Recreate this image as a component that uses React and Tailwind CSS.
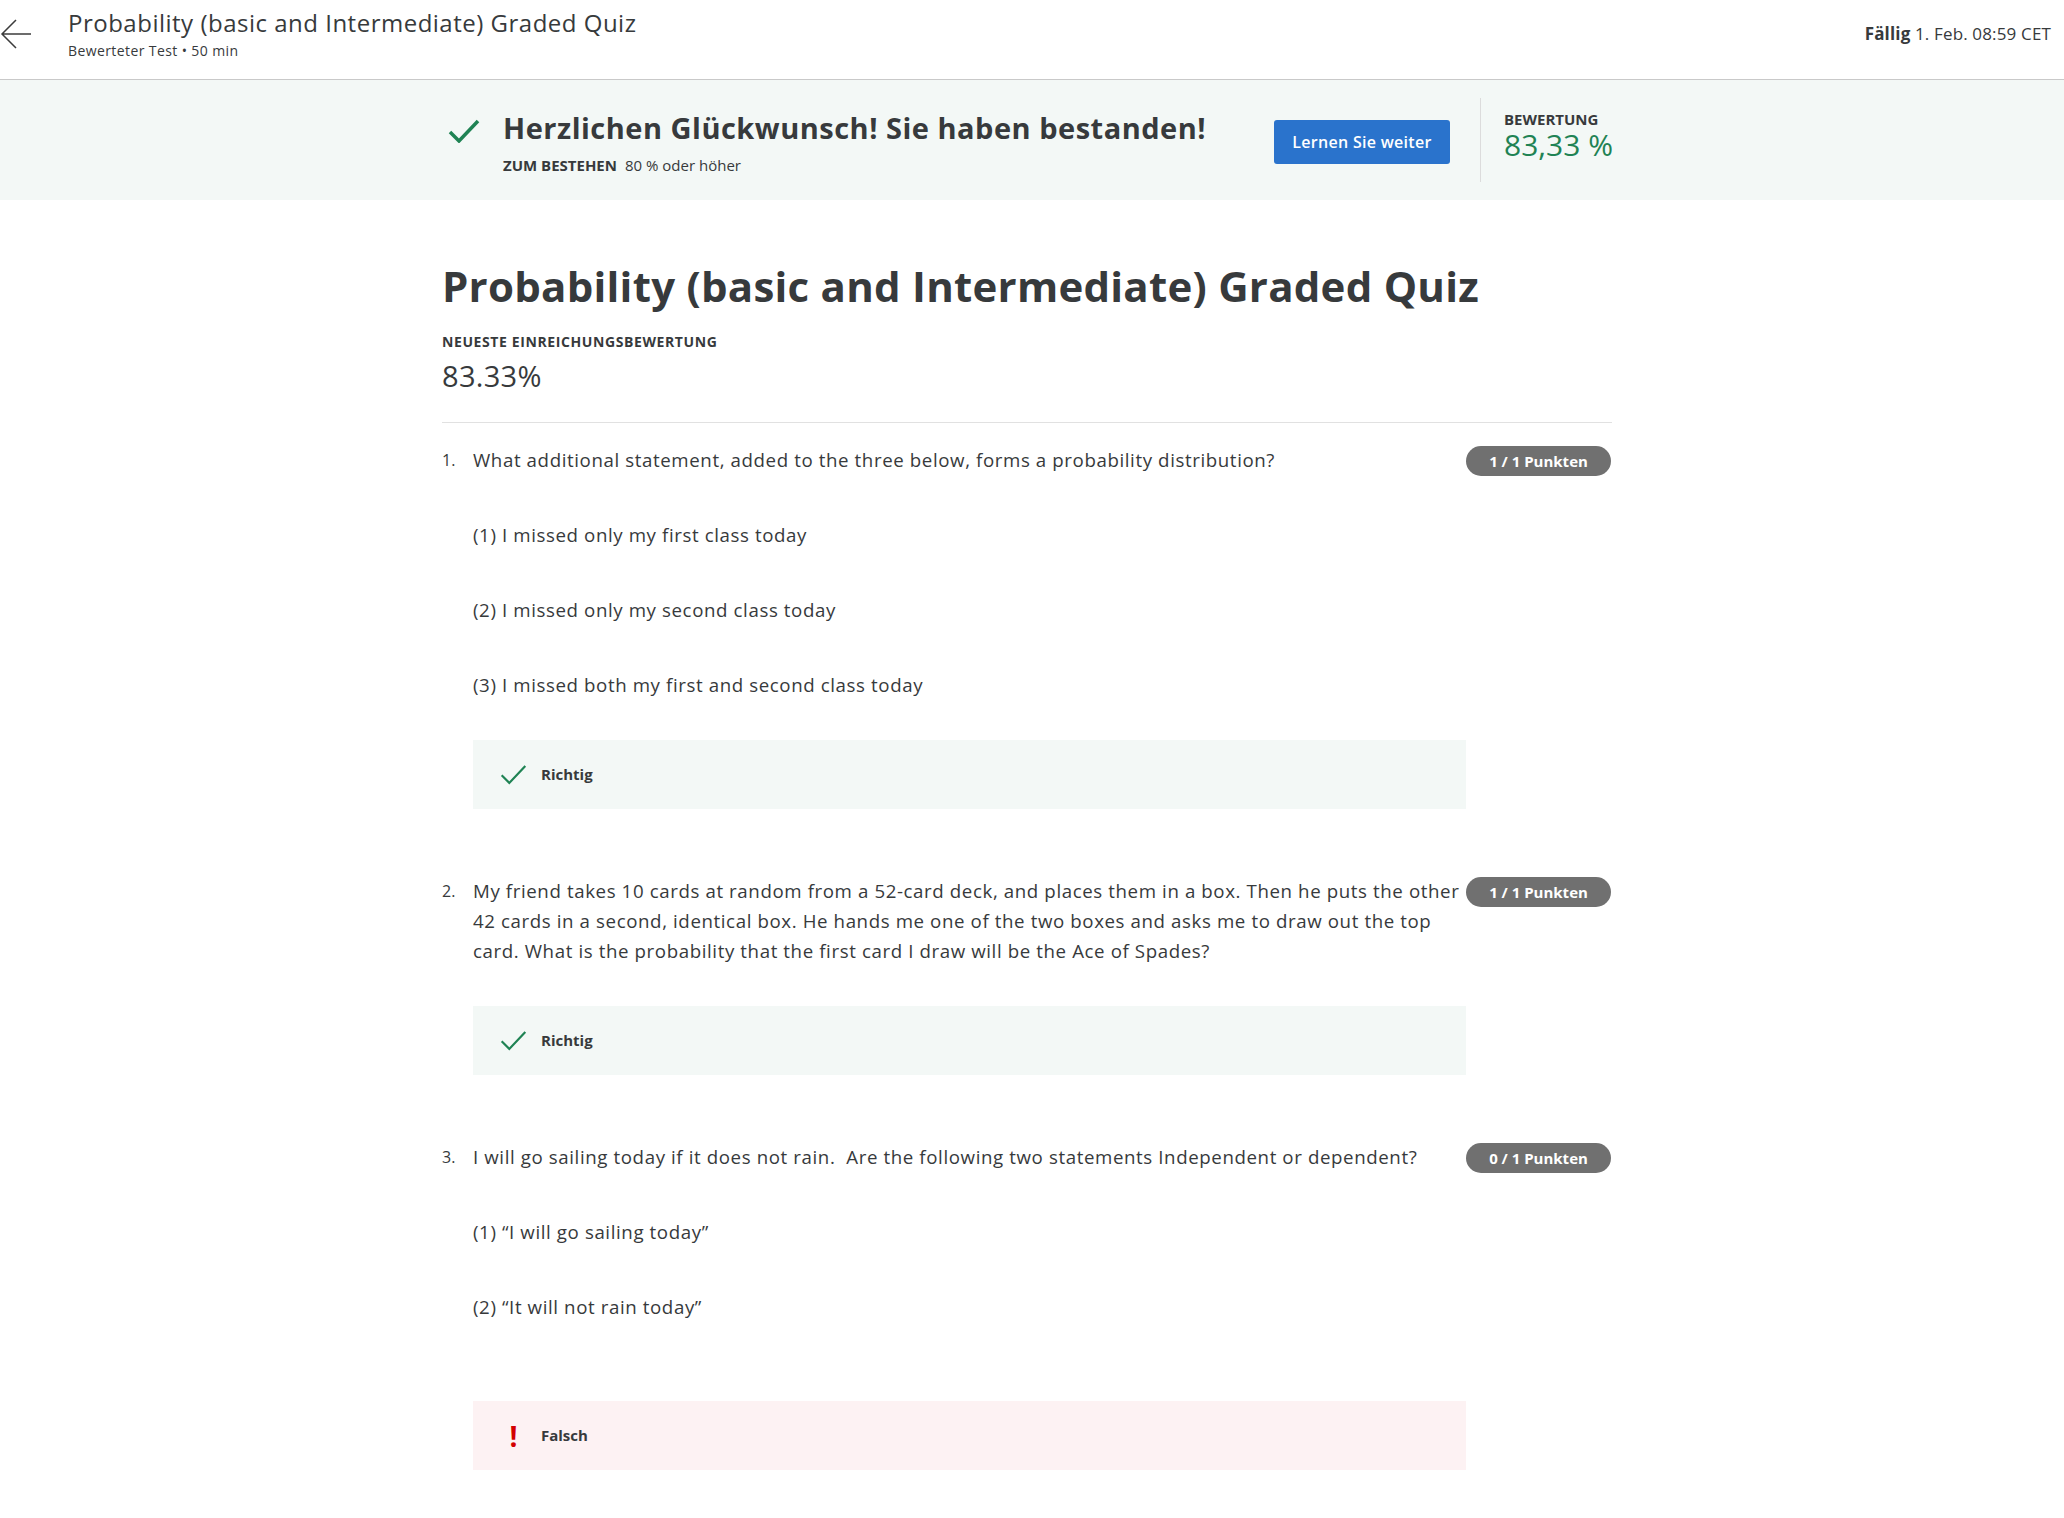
const questions = [
  {
    num: "1.",
    score: "1 / 1 Punkten",
    text: "What additional statement, added to the three below, forms a probability distribution?",
    options: [
      "(1) I missed only my first class today",
      "(2) I missed only my second class today",
      "(3) I missed both my first and second class today",
    ],
    correct: true,
    boxGap: "mt-[40px]",
  },
  {
    num: "2.",
    score: "1 / 1 Punkten",
    text: "My friend takes 10 cards at random from a 52-card deck, and places them in a box. Then he puts the other 42 cards in a second, identical box. He hands me one of the two boxes and asks me to draw out the top card. What is the probability that the first card I draw will be the Ace of Spades?",
    options: [],
    correct: true,
    boxGap: "mt-[40px]",
  },
  {
    num: "3.",
    score: "0 / 1 Punkten",
    text: "I will go sailing today if it does not rain.\u00a0 Are the following two statements Independent or dependent?",
    options: ["(1) \u201cI will go sailing today\u201d", "(2) \u201cIt will not rain today\u201d"],
    correct: false,
    boxGap: "mt-[79px]",
  },
];

function CheckIcon({ className, strokeWidth }) {
  return (
    <svg className={className} viewBox="0 0 32 24" fill="none">
      <path d="M2 13 L11 22 L30 2" stroke="#1f8354" strokeWidth={strokeWidth} />
    </svg>
  );
}

function Question({ q, first }) {
  return (
    <div className={`flex ${first ? "" : "mt-[67px]"}`}>
      <div className="w-[31px] shrink-0 text-[16px] leading-[30px] text-[#373a3c]">{q.num}</div>
      <div className="w-[993px] shrink-0">
        <div className="space-y-[45px] text-[18.7px] leading-[30px] tracking-[0.6px] text-[#373a3c]">
          <p>{q.text}</p>
          {q.options.map((o) => (
            <p key={o}>{o}</p>
          ))}
        </div>
        <div
          className={`${q.boxGap} h-[69px] flex items-center pl-[27px] ${
            q.correct ? "bg-[#f3f8f6]" : "bg-[#fdf2f3]"
          }`}
        >
          <div className="w-[27px] flex justify-center">
            {q.correct ? (
              <CheckIcon className="w-[27px] h-[21px]" strokeWidth={2.6} />
            ) : (
              <span className="text-[#d30001] text-[28px] font-bold leading-none">!</span>
            )}
          </div>
          <span className="ml-[14px] text-[15px] font-bold text-[#373a3c]">
            {q.correct ? "Richtig" : "Falsch"}
          </span>
        </div>
      </div>
      <div className="w-[145px] shrink-0 pt-px">
        <div className="h-[30px] rounded-full bg-[#707070] text-white text-[15px] font-bold flex items-center justify-center">
          {q.score}
        </div>
      </div>
    </div>
  );
}

export default function App() {
  return (
    <div className="min-h-[1518px] bg-white font-['Open_Sans',sans-serif] text-[#373a3c]">
      <header className="h-[80px] border-b border-[#c9c9c9] flex justify-between">
        <div className="flex">
          <div className="pt-[18px]">
            <svg width="32" height="32" viewBox="0 0 32 32" fill="none">
              <path d="M31 16 H2 M16 2 L2 16 L16 30" stroke="#3c3c3c" strokeWidth="1.5" />
            </svg>
          </div>
          <div className="ml-[36px] pt-[7px]">
            <div className="text-[24px] leading-[32px] tracking-[0.5px]">
              Probability (basic and Intermediate) Graded Quiz
            </div>
            <div className="mt-[3px] text-[14px] leading-[18px] tracking-[0.4px]">Bewerteter Test • 50 min</div>
          </div>
        </div>
        <div className="pt-[22px] pr-[13px] text-[17px] leading-[24px] tracking-[0.15px]">
          <span className="font-bold">Fällig</span> 1. Feb. 08:59 CET
        </div>
      </header>

      <section className="h-[120px] bg-[#f3f8f6]">
        <div className="mx-auto w-[1180px] pr-[10px] flex h-full">
          <div className="flex flex-1">
            <CheckIcon className="ml-[6px] mt-[39px] w-[32px] h-[24px]" strokeWidth={3.5} />
            <div className="ml-[23px] pt-[30px]">
              <div className="text-[29px] leading-[36px] font-bold tracking-[0.5px]">
                Herzlichen Glückwunsch! Sie haben bestanden!
              </div>
              <div className="mt-[9px] text-[15px] leading-[20px]">
                <span className="font-bold">ZUM BESTEHEN</span>
                <span className="ml-[8px]">80 % oder höher</span>
              </div>
            </div>
          </div>
          <div className="pt-[40px]">
            <button className="w-[176px] h-[44px] rounded-[3px] bg-[#2a73cc] text-white text-[16px] font-semibold tracking-[0.3px]">
              Lernen Sie weiter
            </button>
          </div>
          <div className="ml-[30px] mt-[18px] h-[84px] w-px bg-[#dcdcdc]" />
          <div className="ml-[23px] w-[108px] pt-[30px] whitespace-nowrap">
            <div className="text-[15px] leading-[18px] font-bold">BEWERTUNG</div>
            <div className="text-[30px] leading-[34px] text-[#1f8354]">83,33 %</div>
          </div>
        </div>
      </section>

      <main className="mx-auto w-[1180px] pr-[10px]">
        <h1 className="pt-[60px] text-[42px] leading-[52px] font-bold tracking-[0.25px]">
          Probability (basic and Intermediate) Graded Quiz
        </h1>
        <div className="mt-[20px] text-[14px] leading-[20px] font-bold tracking-[0.6px]">
          NEUESTE EINREICHUNGSBEWERTUNG
        </div>
        <div className="mt-[6px] text-[29px] leading-[36px] tracking-[0.3px]">83.33%</div>
        <div className="mt-[28px] h-px bg-[#e1e1e1]" />
        <div className="pt-[22px] pb-[50px]">
          {questions.map((q, i) => (
            <Question key={q.num} q={q} first={i === 0} />
          ))}
        </div>
      </main>
    </div>
  );
}
